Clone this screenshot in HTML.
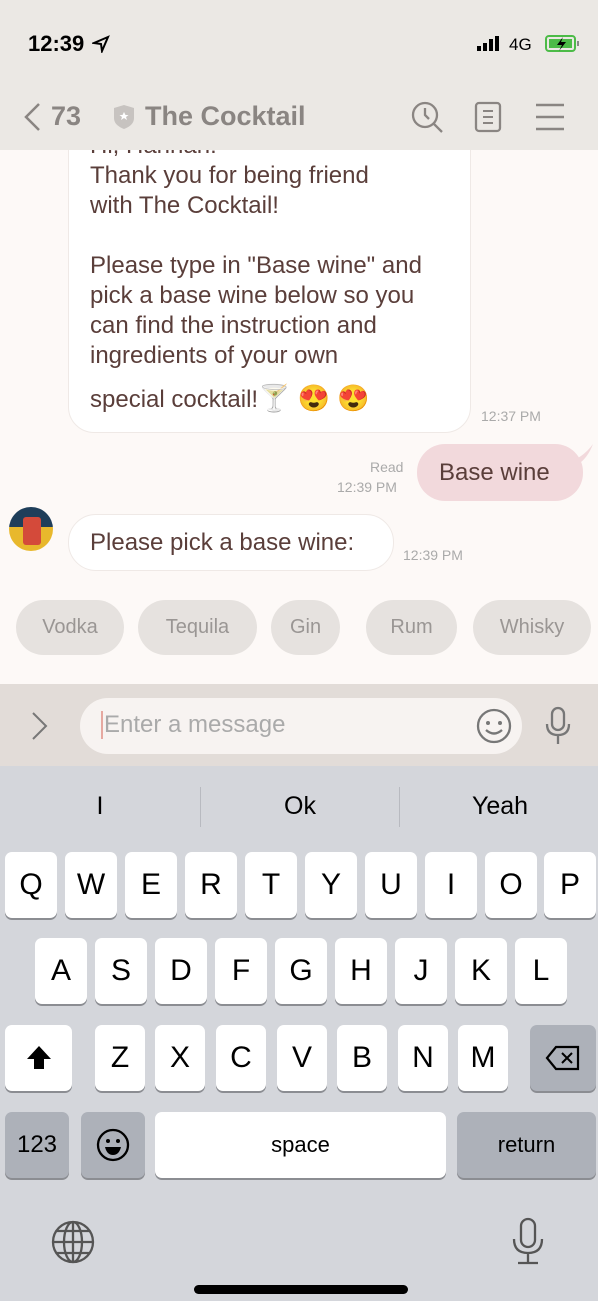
<!DOCTYPE html>
<html><head><meta charset="utf-8"><style>
*{margin:0;padding:0;box-sizing:border-box}
body{width:598px;height:1301px;position:relative;overflow:hidden;font-family:"Liberation Sans",sans-serif;background:#fdf9f7}
.a{position:absolute}
.t{color:#5a3e3a;font-size:24px;line-height:30px}
.key{position:absolute;background:#fff;border-radius:7px;box-shadow:0 2px 0 #8b8d92;font-size:30px;color:#000;display:flex;align-items:center;justify-content:center;width:52px;height:66px}
.dk{background:#adb1b9}
.chip{position:absolute;top:600px;height:55px;background:#e6e2df;border-radius:28px;color:#9a9694;font-size:20px;display:flex;align-items:center;justify-content:center}
.tm{color:#aaa;font-size:14px}
</style></head><body>
<div class="a" style="left:68px;top:110px;width:403px;height:323px;background:#fff;border-radius:26px;border:1px solid #efe9e6"></div>
<div class="a t" style="left:90px;top:131px">Hi, Hannah!<br>Thank you for being friend<br>with The Cocktail!<br><br>Please type in "Base wine" and<br>pick a base wine below so you<br>can find the instruction and<br>ingredients of your own</div>
<div class="a t" style="left:90px;top:383px">special cocktail!<span style="font-size:26px">🍸 😍 😍</span></div>
<div class="a tm" style="left:481px;top:408px">12:37 PM</div>

<div class="a" style="left:0;top:0;width:598px;height:150px;background:#ebe8e4"></div>
<div class="a" style="left:28px;top:31px;font-size:22px;font-weight:bold;color:#000">12:39</div>
<svg class="a" style="left:92px;top:35px" width="18" height="18" viewBox="0 0 18 18"><path d="M16 2L2 8l7 1 1 7z" fill="none" stroke="#000" stroke-width="2"/></svg>
<svg class="a" style="left:476px;top:36px" width="30" height="16"><rect x="1" y="10" width="4" height="5" fill="#000"/><rect x="7" y="7" width="4" height="8" fill="#000"/><rect x="13" y="3" width="4" height="12" fill="#000"/><rect x="19" y="0" width="4" height="15" fill="#000"/></svg>
<div class="a" style="left:509px;top:35px;font-size:17px;color:#000">4G</div>
<svg class="a" style="left:545px;top:34px" width="36" height="20"><rect x="1" y="2" width="29" height="15" rx="3" fill="none" stroke="#4cbb47" stroke-width="2"/><rect x="4" y="5" width="23" height="9" fill="#4cbb47"/><rect x="32" y="7" width="2" height="5" fill="#888"/><path d="M18 3l-6 8h5l-3 6 7-9h-5z" fill="#000"/></svg>
<svg class="a" style="left:22px;top:102px" width="20" height="30"><path d="M17 2L4 15l13 13" fill="none" stroke="#8a8582" stroke-width="2.5"/></svg>
<div class="a" style="left:51px;top:101px;font-size:27px;color:#8a8582;font-weight:bold">73</div>
<svg class="a" style="left:113px;top:104px" width="22" height="26"><path d="M11 1L21 4v10c0 6-5 9-10 11C6 23 1 20 1 14V4z" fill="#c7c3c0"/><path d="M11 8l1.5 3h3l-2.5 2 1 3-3-2-3 2 1-3-2.5-2h3z" fill="#fff"/></svg>
<div class="a" style="left:145px;top:101px;font-size:27px;color:#8a8582;font-weight:bold">The Cocktail</div>
<svg class="a" style="left:410px;top:100px" width="34" height="34"><circle cx="15" cy="15" r="12" fill="none" stroke="#8a8582" stroke-width="2.3"/><path d="M15 8v7l4 4M24 24l8 8" fill="none" stroke="#8a8582" stroke-width="2.3"/></svg>
<svg class="a" style="left:474px;top:101px" width="30" height="32"><rect x="2" y="2" width="24" height="28" rx="3" fill="none" stroke="#8a8582" stroke-width="2.3"/><path d="M9 10h10M9 16h10M9 22h10" stroke="#8a8582" stroke-width="2"/></svg>
<svg class="a" style="left:536px;top:103px" width="30" height="28"><path d="M0 2h28M0 14h28M0 26h28" stroke="#8a8582" stroke-width="2.5"/></svg>

<div class="a" style="left:417px;top:444px;width:166px;height:57px;background:#f2d9dc;border-radius:28px"></div>
<svg class="a" style="left:565px;top:444px" width="30" height="20"><path d="M0 20Q18 14 28 0Q22 16 10 22z" fill="#f2d9dc"/></svg>
<div class="a t" style="left:439px;top:458px">Base wine</div>
<div class="a tm" style="left:370px;top:459px">Read</div>
<div class="a tm" style="left:337px;top:479px">12:39 PM</div>

<div class="a" style="left:9px;top:507px;width:44px;height:44px;border-radius:50%;background:linear-gradient(#1f3e5a 0 45%,#e8b82c 45%);overflow:hidden"><div style="position:absolute;left:14px;top:10px;width:18px;height:28px;background:#d44a3a;border-radius:3px"></div></div>
<div class="a" style="left:68px;top:514px;width:326px;height:57px;background:#fff;border-radius:28px;border:1px solid #efe9e6"></div>
<div class="a t" style="left:90px;top:528px">Please pick a base wine:</div>
<div class="a tm" style="left:403px;top:547px">12:39 PM</div>

<div class="chip" style="left:16px;width:108px">Vodka</div>
<div class="chip" style="left:138px;width:119px">Tequila</div>
<div class="chip" style="left:271px;width:69px">Gin</div>
<div class="chip" style="left:366px;width:91px">Rum</div>
<div class="chip" style="left:473px;width:118px">Whisky</div>

<div class="a" style="left:0;top:684px;width:598px;height:82px;background:#e2dcd8"></div>
<svg class="a" style="left:30px;top:711px" width="20" height="30"><path d="M3 2l13 13L3 28" fill="none" stroke="#777" stroke-width="2"/></svg>
<div class="a" style="left:80px;top:698px;width:442px;height:56px;background:#f7f3f1;border-radius:28px"></div>
<div class="a" style="left:101px;top:711px;width:2px;height:28px;background:#e6a8a0"></div>
<div class="a" style="left:104px;top:711px;font-size:24px;color:#aaa">Enter a message</div>
<svg class="a" style="left:475px;top:707px" width="38" height="38"><circle cx="19" cy="19" r="16" fill="none" stroke="#777" stroke-width="2.3"/><circle cx="13" cy="16" r="2" fill="#777"/><circle cx="25" cy="16" r="2" fill="#777"/><path d="M11 23q8 7 16 0" fill="none" stroke="#777" stroke-width="2.3"/></svg>
<svg class="a" style="left:543px;top:706px" width="30" height="40"><rect x="9" y="2" width="12" height="22" rx="6" fill="none" stroke="#777" stroke-width="2.3"/><path d="M4 18q0 11 11 11q11 0 11-11M15 29v9" fill="none" stroke="#777" stroke-width="2.3"/></svg>

<div class="a" style="left:0;top:766px;width:598px;height:535px;background:#d4d6db"></div>
<div class="a" style="left:200px;top:787px;width:1px;height:40px;background:#b8bac0"></div>
<div class="a" style="left:399px;top:787px;width:1px;height:40px;background:#b8bac0"></div>
<div class="a" style="left:0;top:792px;width:200px;text-align:center;font-size:25px">I</div>
<div class="a" style="left:200px;top:792px;width:200px;text-align:center;font-size:25px">Ok</div>
<div class="a" style="left:400px;top:792px;width:200px;text-align:center;font-size:25px">Yeah</div>

<div class="key" style="left:5px;top:852px">Q</div><div class="key" style="left:65px;top:852px">W</div><div class="key" style="left:125px;top:852px">E</div><div class="key" style="left:185px;top:852px">R</div><div class="key" style="left:245px;top:852px">T</div><div class="key" style="left:305px;top:852px">Y</div><div class="key" style="left:365px;top:852px">U</div><div class="key" style="left:425px;top:852px">I</div><div class="key" style="left:485px;top:852px">O</div><div class="key" style="left:544px;top:852px">P</div>
<div class="key" style="left:35px;top:938px">A</div><div class="key" style="left:95px;top:938px">S</div><div class="key" style="left:155px;top:938px">D</div><div class="key" style="left:215px;top:938px">F</div><div class="key" style="left:275px;top:938px">G</div><div class="key" style="left:335px;top:938px">H</div><div class="key" style="left:395px;top:938px">J</div><div class="key" style="left:455px;top:938px">K</div><div class="key" style="left:515px;top:938px">L</div>
<div class="key" style="left:5px;top:1025px;width:67px"><svg width="30" height="30"><path d="M15 3L3 16h7v10h10V16h7z" fill="#000"/></svg></div>
<div class="key" style="left:95px;top:1025px;width:50px">Z</div><div class="key" style="left:155px;top:1025px;width:50px">X</div><div class="key" style="left:216px;top:1025px;width:50px">C</div><div class="key" style="left:277px;top:1025px;width:50px">V</div><div class="key" style="left:337px;top:1025px;width:50px">B</div><div class="key" style="left:398px;top:1025px;width:50px">N</div><div class="key" style="left:458px;top:1025px;width:50px">M</div>
<div class="key dk" style="left:530px;top:1025px;width:66px"><svg width="36" height="28"><path d="M11 3h22v22H11L2 14z" fill="none" stroke="#000" stroke-width="2.2"/><path d="M17 9l10 10M27 9L17 19" stroke="#000" stroke-width="2"/></svg></div>
<div class="key dk" style="left:5px;top:1112px;width:64px;font-size:24px">123</div>
<div class="key dk" style="left:81px;top:1112px;width:64px"><svg width="34" height="34"><circle cx="17" cy="17" r="15" fill="none" stroke="#000" stroke-width="2.3"/><circle cx="12" cy="13" r="2" fill="#000"/><circle cx="22" cy="13" r="2" fill="#000"/><path d="M9 19h16q-2 8-8 8t-8-8z" fill="#000"/></svg></div>
<div class="key" style="left:155px;top:1112px;width:291px;font-size:22px">space</div>
<div class="key dk" style="left:457px;top:1112px;width:139px;font-size:22px">return</div>

<svg class="a" style="left:50px;top:1219px" width="46" height="46"><g fill="none" stroke="#555" stroke-width="2.3"><circle cx="23" cy="23" r="20"/><ellipse cx="23" cy="23" rx="9" ry="20"/><path d="M23 3v40M3 23h40M7 12h32M7 34h32"/></g></svg>
<svg class="a" style="left:510px;top:1217px" width="36" height="50"><g fill="none" stroke="#555" stroke-width="2.3"><rect x="11" y="2" width="14" height="28" rx="7"/><path d="M4 22q0 14 14 14q14 0 14-14M18 36v10M8 46h20"/></g></svg>
<div class="a" style="left:194px;top:1285px;width:214px;height:9px;border-radius:5px;background:#000"></div>
</body></html>
